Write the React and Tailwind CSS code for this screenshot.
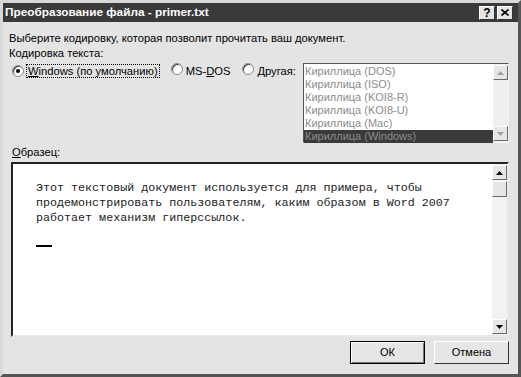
import React from "react";

const ui = { fontFamily: '"Liberation Sans", Arial, sans-serif' };
const mono = { fontFamily: '"Liberation Mono", "Courier New", monospace' };

function Radio({ checked }) {
  return (
    <span className="relative inline-block w-[12px] h-[12px] rounded-full bg-white border border-[#8a8a8a] shadow-[inset_1px_1px_0_#404040]">
      {checked && (
        <span className="absolute left-[3px] top-[3px] w-[4px] h-[4px] rounded-full bg-black" />
      )}
    </span>
  );
}

function ScrollBtn({ dir, disabled, className = "" }) {
  const fill = disabled ? "#a0a0a0" : "#000";
  return (
    <div
      className={`w-[15px] h-[15px] bg-[#e6e6e6] border border-t-white border-l-white border-r-[#6a6a6a] border-b-[#6a6a6a] flex items-center justify-center ${className}`}
    >
      <svg width="7" height="4" viewBox="0 0 7 4">
        {dir === "up" ? (
          <polygon points="3.5,0 7,4 0,4" fill={fill} />
        ) : (
          <polygon points="0,0 7,0 3.5,4" fill={fill} />
        )}
      </svg>
    </div>
  );
}

export default function App() {
  const encodings = [
    "Кириллица (DOS)",
    "Кириллица (ISO)",
    "Кириллица (KOI8-R)",
    "Кириллица (KOI8-U)",
    "Кириллица (Mac)",
    "Кириллица (Windows)",
  ];

  return (
    <div
      className="w-[521px] h-[377px] bg-[#e4e4e4] border-[3px] border-t-[#d8d8d8] border-l-[#d8d8d8] border-r-[#555] border-b-[#555] flex flex-col overflow-hidden text-[11.2px] text-black"
      style={ui}
    >
      {/* title bar */}
      <div className="h-[19px] bg-[#3a3a3a] flex items-center pl-[2px] pr-[5px]">
        <span className="text-white font-bold text-[11.8px] leading-none">
          Преобразование файла - primer.txt
        </span>
        <div className="ml-auto flex gap-[2px]">
          <div className="w-[16px] h-[14px] bg-[#e4e4e4] border border-t-white border-l-white border-r-[#333] border-b-[#333] flex items-center justify-center font-bold text-[12px] leading-none">
            ?
          </div>
          <div className="w-[16px] h-[14px] bg-[#e4e4e4] border border-t-white border-l-white border-r-[#333] border-b-[#333] flex items-center justify-center">
            <svg width="8" height="7" viewBox="0 0 8 7">
              <path d="M0.5 0.5 L7.5 6.5 M7.5 0.5 L0.5 6.5" stroke="#000" strokeWidth="1.6" />
            </svg>
          </div>
        </div>
      </div>

      <div className="flex flex-col flex-1 pl-[6px] pr-[9px]">
        <div className="mt-[10px] leading-[13px]">
          Выберите кодировку, которая позволит прочитать ваш документ.
        </div>
        <div className="mt-[2px] leading-[13px]">Кодировка текста:</div>

        <div className="flex mt-[3px]">
          <div className="flex items-center h-[14px] mt-[1px] pl-[3px]">
            <Radio checked />
            <span className="ml-[2px] px-[1px] border border-dotted border-black leading-[12px]">
              <u>W</u>indows (по умолчанию)
            </span>
            <span className="ml-[11px]">
              <Radio />
            </span>
            <span className="ml-[3px]">
              MS-<u>D</u>OS
            </span>
            <span className="ml-[12px]">
              <Radio />
            </span>
            <span className="ml-[3px]">
              <u>Д</u>ругая:
            </span>
          </div>

          <div className="ml-auto w-[206px] h-[80px] bg-white border border-t-[#555] border-l-[#555] border-r-[#f4f4f4] border-b-[#f4f4f4] flex text-[11px]">
            <div className="flex-1 pt-[1px] flex flex-col">
              {encodings.map((e, i) => (
                <div
                  key={e}
                  className={`h-[13px] leading-[13px] pl-[1px] ${
                    i === 5 ? "bg-[#3a3a3a] text-[#8c8c8c]" : "text-[#8c8c8c]"
                  }`}
                >
                  {e}
                </div>
              ))}
            </div>
            <div className="w-[15px] bg-[#efefef] flex flex-col justify-between py-[1px]">
              <ScrollBtn dir="up" disabled />
              <ScrollBtn dir="down" disabled />
            </div>
          </div>
        </div>

        <div className="mt-[3px] leading-[13px] pl-[3px]">
          <u>О</u>бразец:
        </div>

        <div className="mt-[3px] ml-[2px] h-[175px] bg-white border-2 border-t-[#222] border-l-[#222] border-r-[#e8e8e8] border-b-[#e8e8e8] flex">
          <div className="flex-1 pl-[23px] pt-[17px] text-[11.7px] leading-[15px] text-[#1a1a1a]" style={mono}>
            <div>Этот текстовый документ используется для примера, чтобы</div>
            <div>продемонстрировать пользователям, каким образом в Word 2007</div>
            <div>работает механизм гиперссылок.</div>
            <div className="mt-[19px] w-[16px] h-[2px] bg-black" />
          </div>
          <div className="w-[15px] bg-[#f2f2f2] flex flex-col py-[1px]">
            <ScrollBtn dir="up" />
            <div className="mt-[1px] w-[15px] h-[16px] bg-[#e6e6e6] border border-t-white border-l-white border-r-[#6a6a6a] border-b-[#6a6a6a]" />
            <ScrollBtn dir="down" className="mt-auto" />
          </div>
        </div>

        <div className="flex justify-end gap-[9px] mt-[4px]">
          <button className="w-[75px] h-[23px] bg-[#e6e6e6] border border-black shadow-[inset_1px_1px_0_#fff,inset_-1px_-1px_0_#777] text-[11px]">
            ОК
          </button>
          <button className="w-[75px] h-[23px] bg-[#e6e6e6] border border-t-white border-l-white border-r-[#333] border-b-[#333] text-[11px]">
            Отмена
          </button>
        </div>
      </div>
    </div>
  );
}
